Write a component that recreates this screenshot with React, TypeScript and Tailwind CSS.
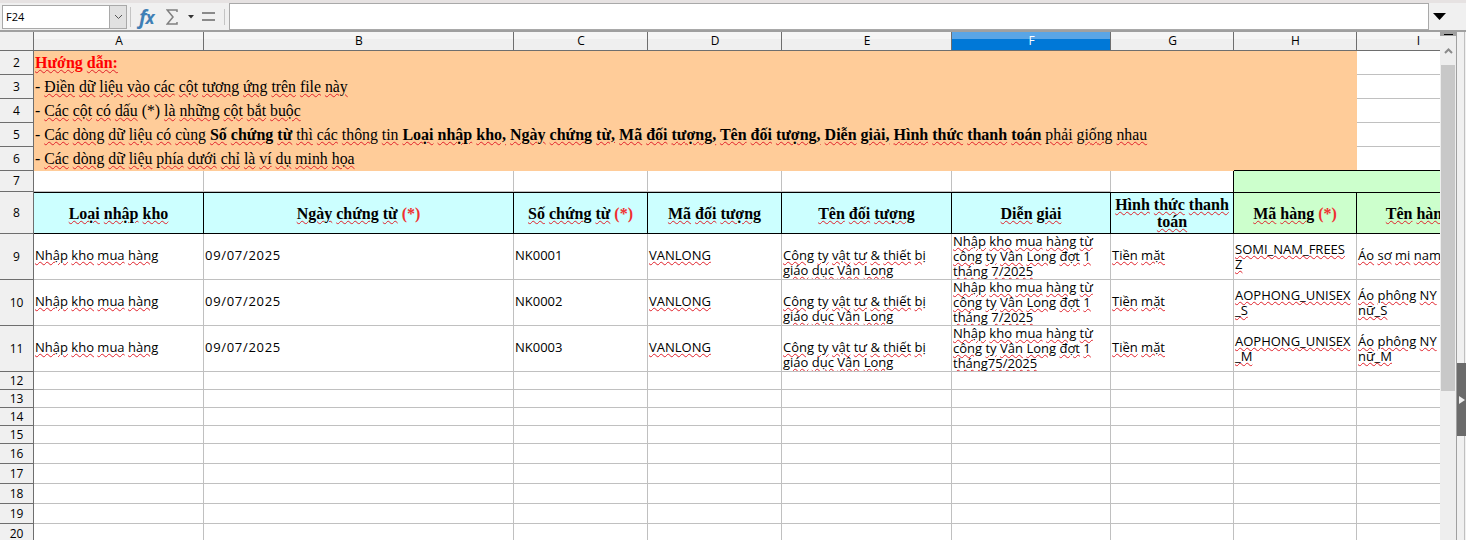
import { ReactNode } from "react";

const GRID_COLS =
  "grid grid-cols-[34px_170px_310px_134px_134px_170px_159px_123px_123px_123px]";

// spell check squiggle goes under every word, not the gaps
function Sq({ text }: { text: string }) {
  const words = text.split(" ");
  return (
    <>
      {words.map((w, i) => (
        <span key={i}>
          <span className="underline decoration-wavy decoration-[#e0202a] decoration-1 underline-offset-1">
            {w}
          </span>
          {i < words.length - 1 ? " " : ""}
        </span>
      ))}
    </>
  );
}

function RowHead({ n, h }: { n: number; h: string }) {
  return (
    <div
      className={`${h} flex items-center justify-center bg-[#f0f0f0] border-r border-r-[#6e6e6e] border-b border-b-[#6e6e6e] text-[12px] text-black`}
    >
      {n}
    </div>
  );
}

function Cell({ children, className = "" }: { children?: ReactNode; className?: string }) {
  return (
    <div
      className={`border-r border-b border-[#c0c0c0] px-px flex overflow-hidden ${className || "items-center"}`}
    >
      {children}
    </div>
  );
}

function HeadCell({
  children,
  green,
  star,
}: {
  children: string;
  green?: boolean;
  star?: boolean;
}) {
  return (
    <div
      className={`h-[42px] border-r border-b border-t border-black flex items-center justify-center text-center whitespace-nowrap font-['Liberation_Serif',serif] font-bold text-[16px] leading-[17px] text-black overflow-hidden ${
        green ? "bg-[#ccffcc]" : "bg-[#ccffff]"
      }`}
    >
      <span>
        <Sq text={children} />
        {star && <span className="text-[#f03030]"> (*)</span>}
      </span>
    </div>
  );
}

function GuideRow({ n, children }: { n: number; children: ReactNode }) {
  return (
    <div className={GRID_COLS}>
      <RowHead n={n} h="h-[24px]" />
      <div className="col-span-8 h-[24px] bg-[#ffcc99] flex items-center pl-px whitespace-nowrap font-['Liberation_Serif',serif] text-[15.8px] text-black">
        <span>{children}</span>
      </div>
      <div className="h-[24px] border-b border-[#c0c0c0]" />
    </div>
  );
}

const dataRows = [
  { n: 9, code: "NK0001", dg: "Nhập kho mua hàng từ công ty Vân Long đợt 1 tháng 7/2025", sku: ["SOMI_NAM_FREES", "Z"], name: ["Áo sơ mi nam"] },
  { n: 10, code: "NK0002", dg: "Nhập kho mua hàng từ công ty Vân Long đợt 1 tháng 7/2025", sku: ["AOPHONG_UNISEX", "_S"], name: ["Áo phông NY", "nữ_S"] },
  { n: 11, code: "NK0003", dg: "Nhập kho mua hàng từ công ty Vân Long đợt 1 tháng75/2025", sku: ["AOPHONG_UNISEX", "_M"], name: ["Áo phông NY", "nữ_M"] },
];

const emptyRows = [
  { n: 12, h: "h-[18px]" },
  { n: 13, h: "h-[18px]" },
  { n: 14, h: "h-[18px]" },
  { n: 15, h: "h-[18px]" },
  { n: 16, h: "h-[20px]" },
  { n: 17, h: "h-[20px]" },
  { n: 18, h: "h-[20px]" },
  { n: 19, h: "h-[20px]" },
  { n: 20, h: "h-[20px]" },
];

const columns = ["A", "B", "C", "D", "E", "F", "G", "H", "I"];

function FormulaBar() {
  return (
    <div className="h-[32px] shrink-0 bg-[#f0f0f0] border-t-[3px] border-t-[#e6e2e2] border-b-2 border-b-[#a0a0a0] flex items-center text-black">
      <div className="ml-[2px] w-[125px] h-[24px] bg-white border border-[#a9a9a9] flex items-center justify-between">
        <span className="pl-[3px] pt-px text-[11px]">F24</span>
        <span className="w-[17px] h-full bg-[#e1e1e1] border-l border-[#a9a9a9] flex items-center justify-center">
          <svg width="9" height="6" viewBox="0 0 9 6" fill="none" stroke="#555" strokeWidth="1">
            <path d="M1 1l3.5 3.5L8 1" />
          </svg>
        </span>
      </div>
      <div className="ml-[3px] w-px h-[20px] bg-[#c4c4c4]" />
      <span className="ml-[8px] w-[16px] font-['Open_Sans',sans-serif] italic font-bold text-[20px] leading-none text-[#3f7fb5] whitespace-nowrap tracking-[-1px]">
        f<span className="text-[17px]">x</span>
      </span>
      <svg className="ml-[11px]" width="12" height="16" viewBox="0 0 12 16" fill="none" stroke="#7f7f7f" strokeWidth="1.5">
        <path d="M11 3V1H1.2L7 8l-5.8 7H11v-2" />
      </svg>
      <svg className="ml-[10px]" width="6" height="4" viewBox="0 0 6 4" fill="#333">
        <path d="M0 0h6L3 3.5z" />
      </svg>
      <svg className="ml-[8px]" width="13" height="9" viewBox="0 0 13 9" fill="#8a8a8a">
        <rect width="13" height="2" />
        <rect y="7" width="13" height="2" />
      </svg>
      <div className="ml-[9px] w-px h-[16px] bg-[#c4c4c4]" />
      <div className="ml-[4px] w-[1200px] h-[27px] bg-white border border-[#a9a9a9]" />
      <svg className="ml-[4px]" width="13" height="7" viewBox="0 0 13 7" fill="#000">
        <path d="M0 0h13L6.5 7z" />
      </svg>
    </div>
  );
}

function ScrollBars() {
  return (
    <>
      <div className="w-[16px] shrink-0 bg-[#eeeeee] flex flex-col">
        <div className="h-[4px] bg-[#a0a0a0] flex items-center justify-center">
          <div className="w-[9px] h-px bg-black" />
        </div>
        <div className="h-[29px] flex items-center justify-center">
          <svg width="9" height="6" viewBox="0 0 9 6" fill="none" stroke="#8a8a8a" strokeWidth="2">
            <path d="M1 5l3.5-3.5L8 5" />
          </svg>
        </div>
        <div className="h-[326px] mx-px bg-[#c8c8c8]" />
      </div>
      <div className="relative flex-1 bg-[#f0f0f0] border-l border-[#a0a0a0]">
        <div className="h-full w-[8px] border-r border-[#c0c0c0]" />
        <div className="absolute left-0 top-[331px] w-[9px] h-[73px] bg-[#6b6b6b] flex items-center justify-center">
          <svg width="6" height="8" viewBox="0 0 6 8" fill="#eee">
            <path d="M0 0l6 4-6 4z" />
          </svg>
        </div>
      </div>
    </>
  );
}

export default function App() {
  return (
    <div className="w-[1466px] h-[540px] overflow-hidden flex flex-col bg-white font-['Open_Sans',sans-serif]">
      <FormulaBar />
      <div className="flex flex-1 min-h-0">
        <div className="w-[1440px] shrink-0 overflow-hidden">
          <div className={`${GRID_COLS} h-[19px] bg-[#f0f0f0] border-b border-[#6e6e6e] text-[12px] text-black`}>
            <div className="border-r border-[#6e6e6e]" />
            {columns.map((c) => (
              <div
                key={c}
                className={`flex items-center justify-center pl-px border-r border-[#6e6e6e] ${
                  c === "F"
                    ? "bg-[linear-gradient(#5aa5e6_40%,#0078d7_40%)] text-white"
                    : "bg-[linear-gradient(#f6f6f6_40%,#efefef_40%)]"
                }`}
              >
                {c}
              </div>
            ))}
          </div>

          <GuideRow n={2}>
            <b className="text-[#ff0000] text-[16px]">
              <Sq text="Hướng dẫn:" />
            </b>
          </GuideRow>
          <GuideRow n={3}>
            - <Sq text="Điền dữ liệu vào các cột tương ứng trên file này" />
          </GuideRow>
          <GuideRow n={4}>
            - <Sq text="Các cột có dấu" /> (*) <Sq text="là những cột bắt buộc" />
          </GuideRow>
          <GuideRow n={5}>
            - <Sq text="Các dòng dữ liệu có cùng" />{" "}
            <b className="text-[16px]">
              <Sq text="Số chứng từ" />
            </b>{" "}
            <Sq text="thì các thông tin" />{" "}
            <b className="text-[16px]">
              <Sq text="Loại nhập kho, Ngày chứng từ, Mã đối tượng, Tên đối tượng, Diễn giải, Hình thức thanh toán" />
            </b>{" "}
            <Sq text="phải giống nhau" />
          </GuideRow>
          <GuideRow n={6}>
            - <Sq text="Các dòng dữ liệu phía dưới chỉ là ví dụ minh họa" />
          </GuideRow>

          <div className={GRID_COLS}>
            <RowHead n={7} h="h-[21px]" />
            {["A", "B", "C", "D", "E", "F"].map((c) => (
              <Cell key={c} className="h-[21px]" />
            ))}
            <div className="h-[21px] border-r border-black" />
            <div className="col-span-2 h-[22px] -mt-px bg-[#ccffcc] border-t border-black" />
          </div>

          <div className={GRID_COLS}>
            <RowHead n={8} h="h-[42px]" />
            <HeadCell>Loại nhập kho</HeadCell>
            <HeadCell star>Ngày chứng từ</HeadCell>
            <HeadCell star>Số chứng từ</HeadCell>
            <HeadCell>Mã đối tượng</HeadCell>
            <HeadCell>Tên đối tượng</HeadCell>
            <HeadCell>Diễn giải</HeadCell>
            <div className="h-[42px] border-r border-b border-t border-black bg-[#ccffff] flex items-center justify-center text-center font-['Liberation_Serif',serif] font-bold text-[16px] leading-[17px] text-black">
              <span className="whitespace-nowrap">
                <Sq text="Hình thức thanh" />
                <br />
                <Sq text="toán" />
              </span>
            </div>
            <HeadCell green star>
              Mã hàng
            </HeadCell>
            <HeadCell green>Tên hàng</HeadCell>
          </div>

          {dataRows.map((r) => (
            <div key={r.n} className={`${GRID_COLS} text-[13px] leading-[15px] text-black`}>
              <RowHead n={r.n} h="h-[46px]" />
              <Cell className="h-[46px] items-center pb-[2px]">
                <span>
                  <Sq text="Nhập kho mua hàng" />
                </span>
              </Cell>
              <Cell className="h-[46px] items-center pb-[2px]">
                <span className="tracking-[0.7px]">09/07/2025</span>
              </Cell>
              <Cell className="h-[46px] items-center pb-[2px]">{r.code}</Cell>
              <Cell className="h-[46px] items-center pb-[2px]">
                <Sq text="VANLONG" />
              </Cell>
              <Cell className="h-[46px] items-end pb-px">
                <span>
                  <Sq text="Công ty vật tư & thiết bị giáo dục Vân Long" />
                </span>
              </Cell>
              <Cell className="h-[46px] items-center pb-px">
                <span>
                  <Sq text={r.dg} />
                </span>
              </Cell>
              <Cell className="h-[46px] items-center pb-[2px]">
                <span>
                  <Sq text="Tiền mặt" />
                </span>
              </Cell>
              <Cell className="h-[46px] items-center">
                <span className="whitespace-nowrap">
                  <Sq text={r.sku[0]} />
                  <br />
                  <Sq text={r.sku[1]} />
                </span>
              </Cell>
              <Cell className={`h-[46px] items-center ${r.name[1] ? "" : "pb-[2px]"}`}>
                <span className="whitespace-nowrap">
                  <Sq text={r.name[0]} />
                  {r.name[1] && (
                    <>
                      <br />
                      <Sq text={r.name[1]} />
                    </>
                  )}
                </span>
              </Cell>
            </div>
          ))}

          {emptyRows.map((r) => (
            <div key={r.n} className={GRID_COLS}>
              <RowHead n={r.n} h={r.h} />
              {columns.map((c) => (
                <Cell key={c} className={r.h} />
              ))}
            </div>
          ))}
        </div>
        <ScrollBars />
      </div>
    </div>
  );
}
